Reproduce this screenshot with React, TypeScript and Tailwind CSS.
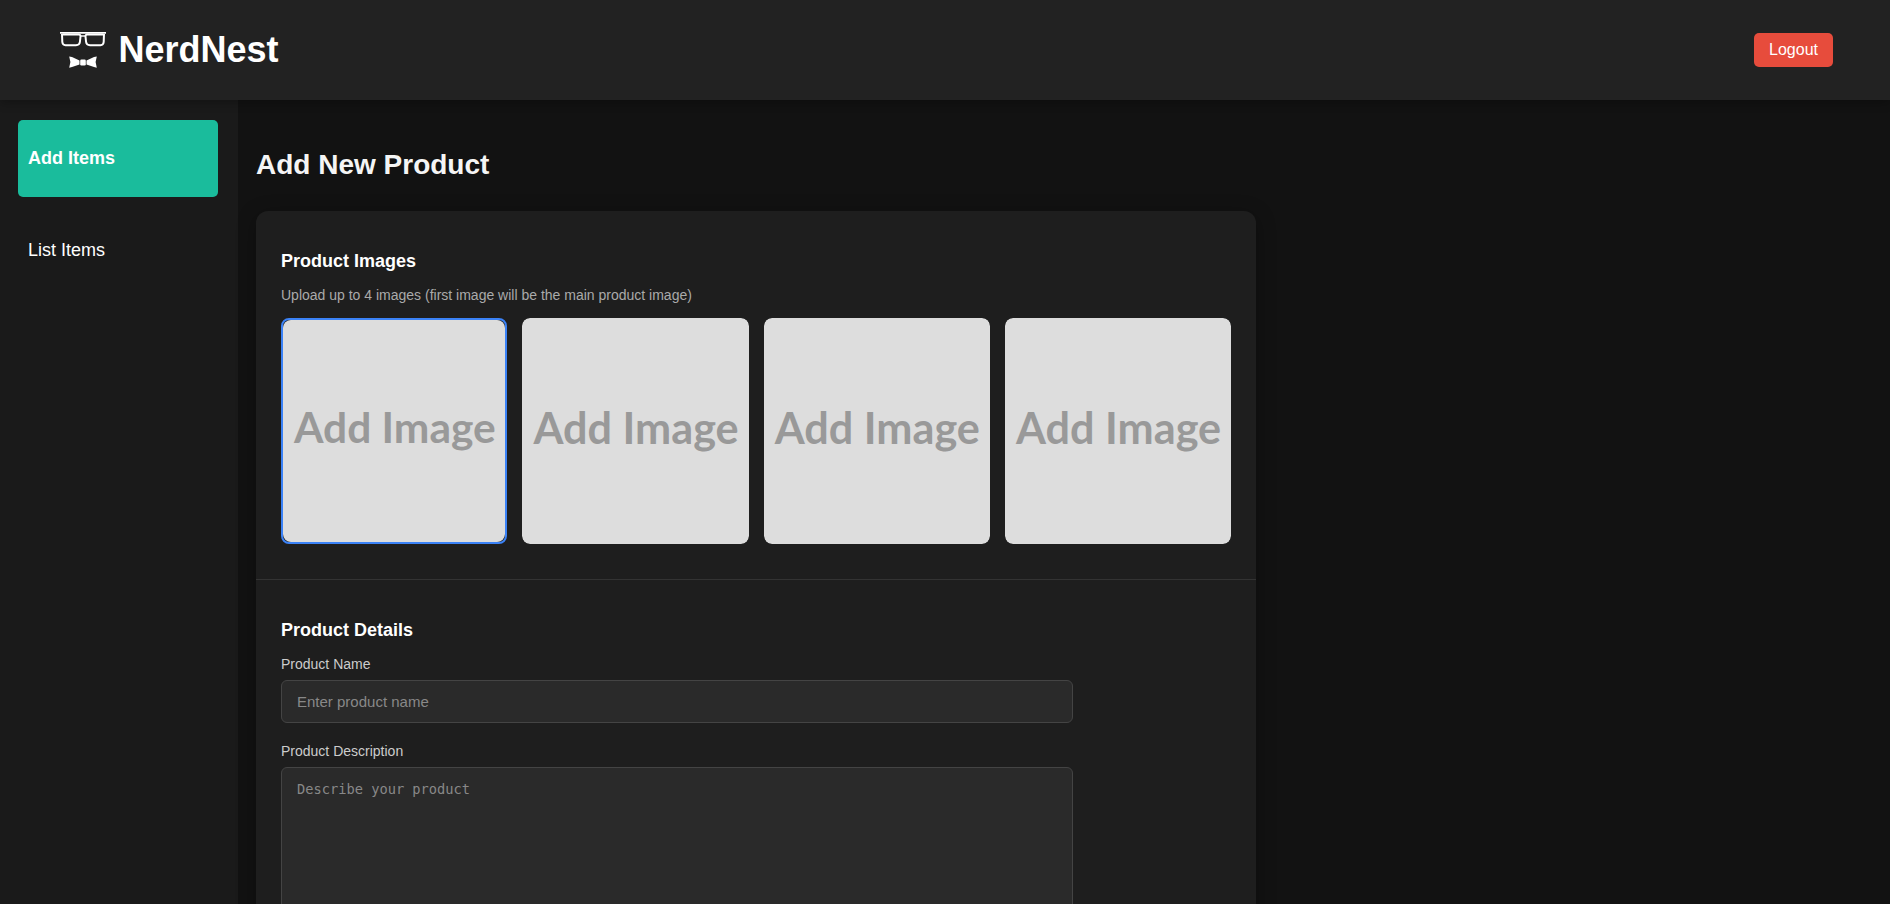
const tiles = [true, false, false, false];

function Logo() {
  return (
    <svg width="46" height="38" viewBox="0 0 46 38" fill="none" stroke="#fff">
      <path d="M0 1.9H46" strokeWidth="1.8" />
      <path d="M2 3L2.3 11Q2.6 14.2 5.5 14.2H16Q19.6 14.2 19.9 11L20.5 5.5Q20.7 3.6 18.8 3.6H2.5" strokeWidth="2" />
      <path d="M44 3L43.7 11Q43.4 14.2 40.5 14.2H30Q26.4 14.2 26.1 11L25.5 5.5Q25.3 3.6 27.2 3.6H43.5" strokeWidth="2" />
      <path d="M20 5H26" strokeWidth="1.4" />
      <path d="M9.2 25.4L12 26L19.5 29.5V33.5L12 36L9.2 36.8L10.4 31Z M36.8 25.4L34 26L26.5 29.5V33.5L34 36L36.8 36.8L35.6 31Z" fill="#fff" stroke="none" />
      <rect x="20.2" y="28.6" width="5.6" height="5.8" rx="1.2" fill="#fff" stroke="none" />
    </svg>
  );
}

export default function App() {
  return (
    <div className="flex h-[904px] flex-col overflow-hidden bg-[#121212] font-['Liberation_Sans',Arial,sans-serif] text-white">
      <header className="relative z-10 flex h-[100px] shrink-0 items-center justify-between bg-[#222] pr-[57px] pl-[60px] shadow-[0_2px_10px_rgba(0,0,0,0.3)]">
        <div className="flex items-center gap-[12.5px]">
          <Logo />
          <span className="text-[36px] leading-[42px] font-bold">NerdNest</span>
        </div>
        <button className="h-[34px] w-[79px] rounded-[5px] bg-[#e74c3c] text-base">Logout</button>
      </header>
      <div className="flex min-h-0 flex-1">
        <aside className="flex w-[238px] shrink-0 flex-col gap-[15px] bg-[#1a1a1a] px-[18px] pt-5 text-lg">
          <a className="flex h-[77px] w-[200px] items-center rounded-[5px] bg-[#1abc9c] px-2.5 pb-0.5 font-bold">Add Items</a>
          <a className="flex h-[77px] w-[200px] items-center rounded-[5px] px-2.5 pb-0.5">List Items</a>
        </aside>
        <main className="flex-1 pl-[18px]">
          <h1 className="mt-[49px] text-[28px] leading-8 font-bold text-[#f5f5f5]">Add New Product</h1>
          <div className="mt-[30px] h-[900px] w-[1000px] rounded-xl bg-[#1e1e1e] shadow-[0_4px_20px_rgba(0,0,0,0.3)]">
            <section className="h-[369px] border-b border-[#333] px-[25px] pt-10">
              <h2 className="text-lg leading-[21px] font-bold">Product Images</h2>
              <p className="mt-[15px] text-sm leading-4 text-[#aaa]">Upload up to 4 images (first image will be the main product image)</p>
              <div className="mt-[15px] grid grid-cols-4 gap-[15px]">
                {tiles.map((active, i) => (
                  <div
                    key={i}
                    className={
                      active
                        ? "aspect-square overflow-hidden rounded-lg border-2 border-[#3b82f6]"
                        : "aspect-square overflow-hidden rounded-lg"
                    }
                  >
                    <div className={`flex h-full w-full items-center justify-center rounded-lg bg-[#ddd] pl-[1.5px] font-['Lato',sans-serif] font-bold whitespace-nowrap text-[#999] ${active ? "pb-[9px] text-[42.5px]" : "pb-[7px] text-[43.2px]"}`}>
                      Add Image
                    </div>
                  </div>
                ))}
              </div>
            </section>
            <section className="px-[25px] pt-10">
              <h2 className="text-lg leading-[21px] font-bold">Product Details</h2>
              <label className="mt-[15px] block text-sm leading-4 text-[#ccc]">Product Name</label>
              <input
                className="mt-2 block h-[43px] w-[792px] rounded-md border border-[#444] bg-[#2a2a2a] px-[15px] text-[15px] placeholder:text-[#888]"
                placeholder="Enter product name"
              />
              <label className="mt-5 block text-sm leading-4 text-[#ccc]">Product Description</label>
              <textarea
                className="mt-2 block h-[200px] w-[792px] resize-none rounded-md border border-[#444] bg-[#2a2a2a] px-[15px] py-3 font-['DejaVu_Sans_Mono',monospace] text-[13.7px] leading-[18px] placeholder:text-[#888]"
                placeholder="Describe your product"
              />
            </section>
          </div>
        </main>
      </div>
    </div>
  );
}
